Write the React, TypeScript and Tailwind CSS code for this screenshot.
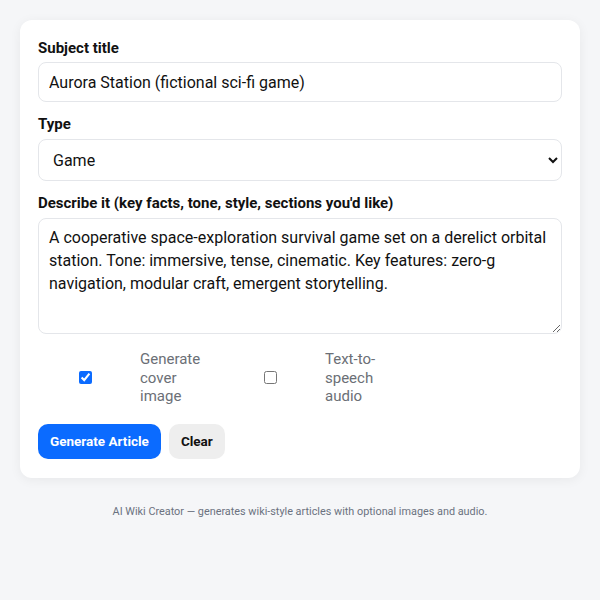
import React, { useState } from 'react';

const TYPES = ['Game', 'Movie', 'Book', 'Person', 'Place', 'Concept'];

export default function App() {
  const [title, setTitle] = useState('Aurora Station (fictional sci-fi game)');
  const [kind, setKind] = useState('Game');
  const [desc, setDesc] = useState(
    'A cooperative space-exploration survival game set on a derelict orbital station. Tone: immersive, tense, cinematic. Key features: zero-g navigation, modular craft, emergent storytelling.'
  );
  const [withImage, setWithImage] = useState(true);
  const [withAudio, setWithAudio] = useState(false);

  const clear = () => {
    setTitle('');
    setDesc('');
    setKind('Game');
  };

  return (
    <div className="min-h-[600px] bg-[#f5f6f8] px-5 pt-5 font-['Roboto',sans-serif] text-[#111]">
      <div className="mx-auto w-full max-w-[560px] rounded-xl bg-white px-[18px] pt-[18px] pb-[19px] shadow-[0_2px_12px_rgba(0,0,0,0.06)]">
        {/* Subject */}
        <label className="block text-[15px] font-bold leading-5">Subject title</label>
        <input
          value={title}
          onChange={(e) => setTitle(e.target.value)}
          className="mt-1 block h-10 w-full rounded-lg border border-[#e4e6ea] px-2.5 text-[16px] text-[#111] outline-none"
        />

        {/* Type */}
        <label className="mt-3 block text-[15px] font-bold leading-5">Type</label>
        <select
          value={kind}
          onChange={(e) => setKind(e.target.value)}
          className="mt-[5px] block h-[42px] w-full rounded-lg border border-[#e4e6ea] bg-white px-2.5 text-[16px] text-[#111] outline-none"
        >
          {TYPES.map((t) => (
            <option key={t}>{t}</option>
          ))}
        </select>

        {/* Description */}
        <label className="mt-3 block text-[15px] font-bold leading-5">
          Describe it (key facts, tone, style, sections you'd like)
        </label>
        <textarea
          value={desc}
          onChange={(e) => setDesc(e.target.value)}
          className="mt-[5px] block h-[116px] w-full rounded-lg border border-[#e4e6ea] px-2.5 py-[7px] text-[16px] leading-[23px] text-[#111] outline-none"
        />

        {/* Options */}
        <div className="mt-4 flex text-[15px] leading-[18.5px] text-[#6b6f76]">
          <label className="flex w-[185px] items-center gap-2">
            <span className="flex w-[94px] justify-center">
              <input
                type="checkbox"
                checked={withImage}
                onChange={(e) => setWithImage(e.target.checked)}
                className="h-[13px] w-[13px] accent-[#0b6bff]"
              />
            </span>
            <span className="w-[70px]">Generate cover image</span>
          </label>
          <label className="flex w-[185px] items-center gap-2">
            <span className="flex w-[94px] justify-center">
              <input
                type="checkbox"
                checked={withAudio}
                onChange={(e) => setWithAudio(e.target.checked)}
                className="h-[13px] w-[13px] accent-[#0b6bff]"
              />
            </span>
            <span className="w-[70px]">Text-to-speech audio</span>
          </label>
        </div>

        {/* Actions */}
        <div className="mt-[18px] flex gap-2">
          <button className="h-[35px] rounded-[10px] bg-[#0b6bff] px-3 text-[13.5px] font-bold text-white">
            Generate Article
          </button>
          <button
            onClick={clear}
            className="h-[35px] rounded-[10px] bg-[#eeeeee] px-3 text-[13.5px] font-bold text-[#111]"
          >
            Clear
          </button>
        </div>
      </div>

      <p className="mt-[26px] text-center text-[10.85px] leading-4 text-[#6b7280]">
        AI Wiki Creator — generates wiki-style articles with optional images and audio.
      </p>
    </div>
  );
}
